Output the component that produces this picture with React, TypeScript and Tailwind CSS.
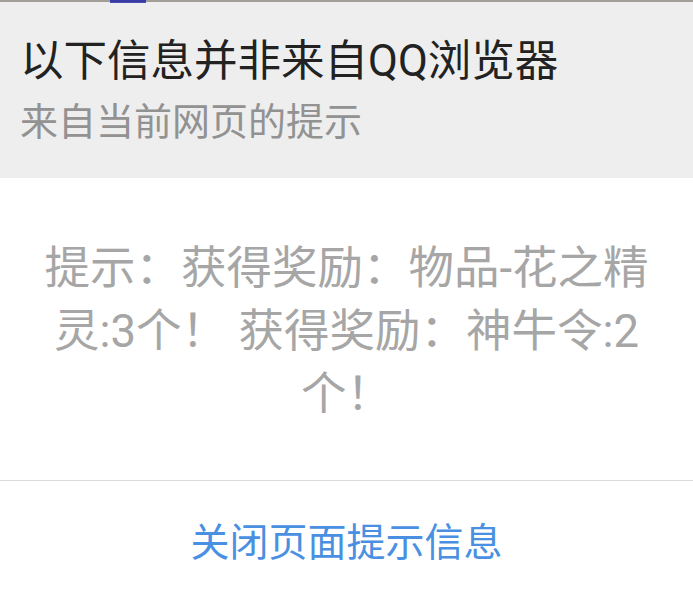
export default function App() {
  const font = { fontFamily: 'Roboto, "Noto Sans CJK SC", sans-serif' };
  return (
    <div className="w-[693px] h-[597px] bg-white flex flex-col overflow-hidden" style={font}>
      {/* edge of the page behind the dialog */}
      <div className="h-[2px] bg-[#a29e9a] flex">
        <div className="ml-[110px] w-[36px] h-[3px] bg-[#2020a8] opacity-80" />
      </div>

      {/* Header */}
      <div className="bg-[#eeeeee] h-[176px] pl-[20px] pt-[34px]">
        <h1 className="text-[43.5px] leading-[52px] text-[#222222]">以下信息并非来自QQ浏览器</h1>
        <p className="mt-[8px] text-[38px] leading-[52px] text-[#929292]">来自当前网页的提示</p>
      </div>

      {/* Message */}
      <div className="h-[302px] px-[34px] pt-[59px] text-center">
        <p className="text-[45.5px] leading-[63px] text-[#a6a6a6]">
          提示：获得奖励：物品-花之精灵:3个！ 获得奖励：神牛令:2个！
        </p>
      </div>

      {/* Action */}
      <div className="border-t border-[#dcdcdc] flex-1 flex items-center justify-center pt-[8px]">
        <button className="text-[39px] text-[#4a90e2]">关闭页面提示信息</button>
      </div>
    </div>
  );
}
